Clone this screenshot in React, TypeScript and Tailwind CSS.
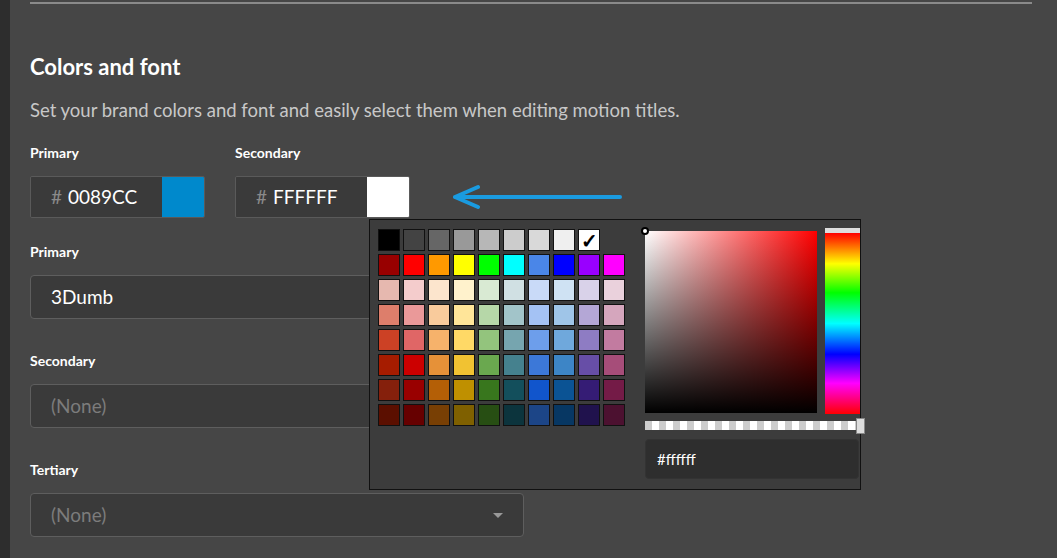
import React from "react";

const rows: string[][] = [
  ["#000000","#434343","#666666","#999999","#b7b7b7","#cccccc","#d9d9d9","#efefef","#ffffff"],
  ["#980000","#ff0000","#ff9900","#ffff00","#00ff00","#00ffff","#4a86e8","#0000ff","#9900ff","#ff00ff"],
  ["#e6b8af","#f4cccc","#fce5cd","#fff2cc","#d9ead3","#d0e0e3","#c9daf8","#cfe2f3","#d9d2e9","#ead1dc"],
  ["#dd7e6b","#ea9999","#f9cb9c","#ffe599","#b6d7a8","#a2c4c9","#a4c2f4","#9fc5e8","#b4a7d6","#d5a6bd"],
  ["#cc4125","#e06666","#f6b26b","#ffd966","#93c47d","#76a5af","#6d9eeb","#6fa8dc","#8e7cc3","#c27ba0"],
  ["#a61c00","#cc0000","#e69138","#f1c232","#6aa84f","#45818e","#3c78d8","#3d85c6","#674ea7","#a64d79"],
  ["#85200c","#990000","#b45f06","#bf9000","#38761d","#134f5c","#1155cc","#0b5394","#351c75","#741b47"],
  ["#5b0f00","#660000","#783f04","#7f6000","#274e13","#0c343d","#1c4587","#073763","#20124d","#4c1130"],
];

const font = { fontFamily: "Lato, 'Noto Sans', sans-serif" };

function ColorInput({ label, hex, color }: { label: string; hex: string; color: string }) {
  return (
    <div className="flex flex-col">
      <div className="text-[14px] font-bold text-white h-[22px]">{label}</div>
      <div className="mt-[12px] flex w-[175px] h-[42px] rounded-[2px] border border-[#5a5a5a] overflow-hidden">
        <div className="flex-1 bg-[#3a3a3a] flex items-center pl-[20px] text-[19px]">
          <span className="text-[#8a8a8a] mr-[6px]">#</span>
          <span className="text-white">{hex}</span>
        </div>
        <div className="w-[42px]" style={{ background: color }} />
      </div>
    </div>
  );
}

function Select({ label, value, muted, mt }: { label: string; value: string; muted?: boolean; mt: string }) {
  return (
    <div className={`flex flex-col ${mt}`}>
      <div className="text-[14px] font-bold text-white h-[22px]">{label}</div>
      <div className="mt-[12px] w-[494px] h-[44px] rounded-[4px] border border-[#5e5e5e] bg-[#3a3a3a] flex items-center px-[20px] justify-between">
        <span className={`text-[19px] ${muted ? "text-[#7c7c7c]" : "text-white"}`}>{value}</span>
        <span className="w-0 h-0 border-l-[5px] border-r-[5px] border-t-[5px] border-l-transparent border-r-transparent border-t-[#999]" />
      </div>
    </div>
  );
}

export default function App() {
  return (
    <div className="w-[1057px] h-[558px] bg-[#464646] flex overflow-hidden relative" style={font}>
      <div className="w-[10px] bg-[#2d2d2d] shrink-0" />
      <div className="flex-1 pl-[20px] pr-[25px]">
        <div className="mt-[2px] h-[2px] bg-[#8a8a8a]" />
        <h2 className="mt-[49px] text-[22px] font-bold text-white leading-[28px]">Colors and font</h2>
        <p className="mt-[17px] text-[18.5px] text-[#c8c8c8] leading-[24px]">Set your brand colors and font and easily select them when editing motion titles.</p>
        <div className="mt-[20px] flex gap-[30px]">
          <ColorInput label="Primary" hex="0089CC" color="#0089cc" />
          <ColorInput label="Secondary" hex="FFFFFF" color="#ffffff" />
          <svg width="180" height="30" className="mt-[40px] ml-[10px]" viewBox="0 0 180 30">
            <path d="M5 15 H170 M5 15 L28 5 M5 15 L28 25" stroke="#1a9be0" strokeWidth="4" strokeLinecap="round" fill="none" />
          </svg>
        </div>
        <Select label="Primary" value="3Dumb" mt="mt-[23px]" />
        <Select label="Secondary" value="(None)" muted mt="mt-[31px]" />
        <Select label="Tertiary" value="(None)" muted mt="mt-[31px]" />
      </div>

      <div className="absolute left-[369px] top-[219px] w-[492px] h-[271px] bg-[#3c3c3c] border border-[#111] flex p-[8px] gap-[10px]">
        <div className="flex flex-col gap-[3px] pt-[1px]">
          {rows.map((r, i) => (
            <div key={i} className="flex gap-[3px]">
              {r.map((c, j) => (
                <div key={j} className="w-[22px] h-[22px] border border-[#111] flex items-center justify-center" style={{ background: c }}>
                  {i === 0 && j === 8 && <span className="text-black text-[20px] leading-none font-bold">✓</span>}
                </div>
              ))}
            </div>
          ))}
        </div>
        <div className="flex flex-col pl-[10px]">
          <div className="flex gap-[8px]">
            <div className="relative w-[172px] h-[182px] mt-[3px]" style={{ background: "linear-gradient(to top,#000,transparent),linear-gradient(to right,#fff,#f00)" }}>
              <div className="absolute -left-[4px] -top-[4px] w-[8px] h-[8px] rounded-full border-2 border-black bg-white" />
            </div>
            <div className="w-[35px] h-[186px] border-t-[5px] border-[#ddd]" style={{ background: "linear-gradient(to bottom,#f00,#ff0 17%,#0f0 33%,#0ff 50%,#00f 67%,#f0f 83%,#f00)" }} />
          </div>
          <div className="relative mt-[7px] w-[214px] h-[9px]" style={{ background: "repeating-linear-gradient(to right,#ccc 0 7px,#fff 7px 14px)" }}>
            <div className="absolute right-[-6px] -top-[3px] w-[9px] h-[16px] bg-[#ddd] border border-[#888]" />
          </div>
          <div className="mt-[9px] w-[214px] h-[40px] rounded-[4px] bg-[#2e2e2e] border border-[#333] flex items-center pl-[11px] text-white text-[15px]">#ffffff</div>
        </div>
      </div>
    </div>
  );
}
